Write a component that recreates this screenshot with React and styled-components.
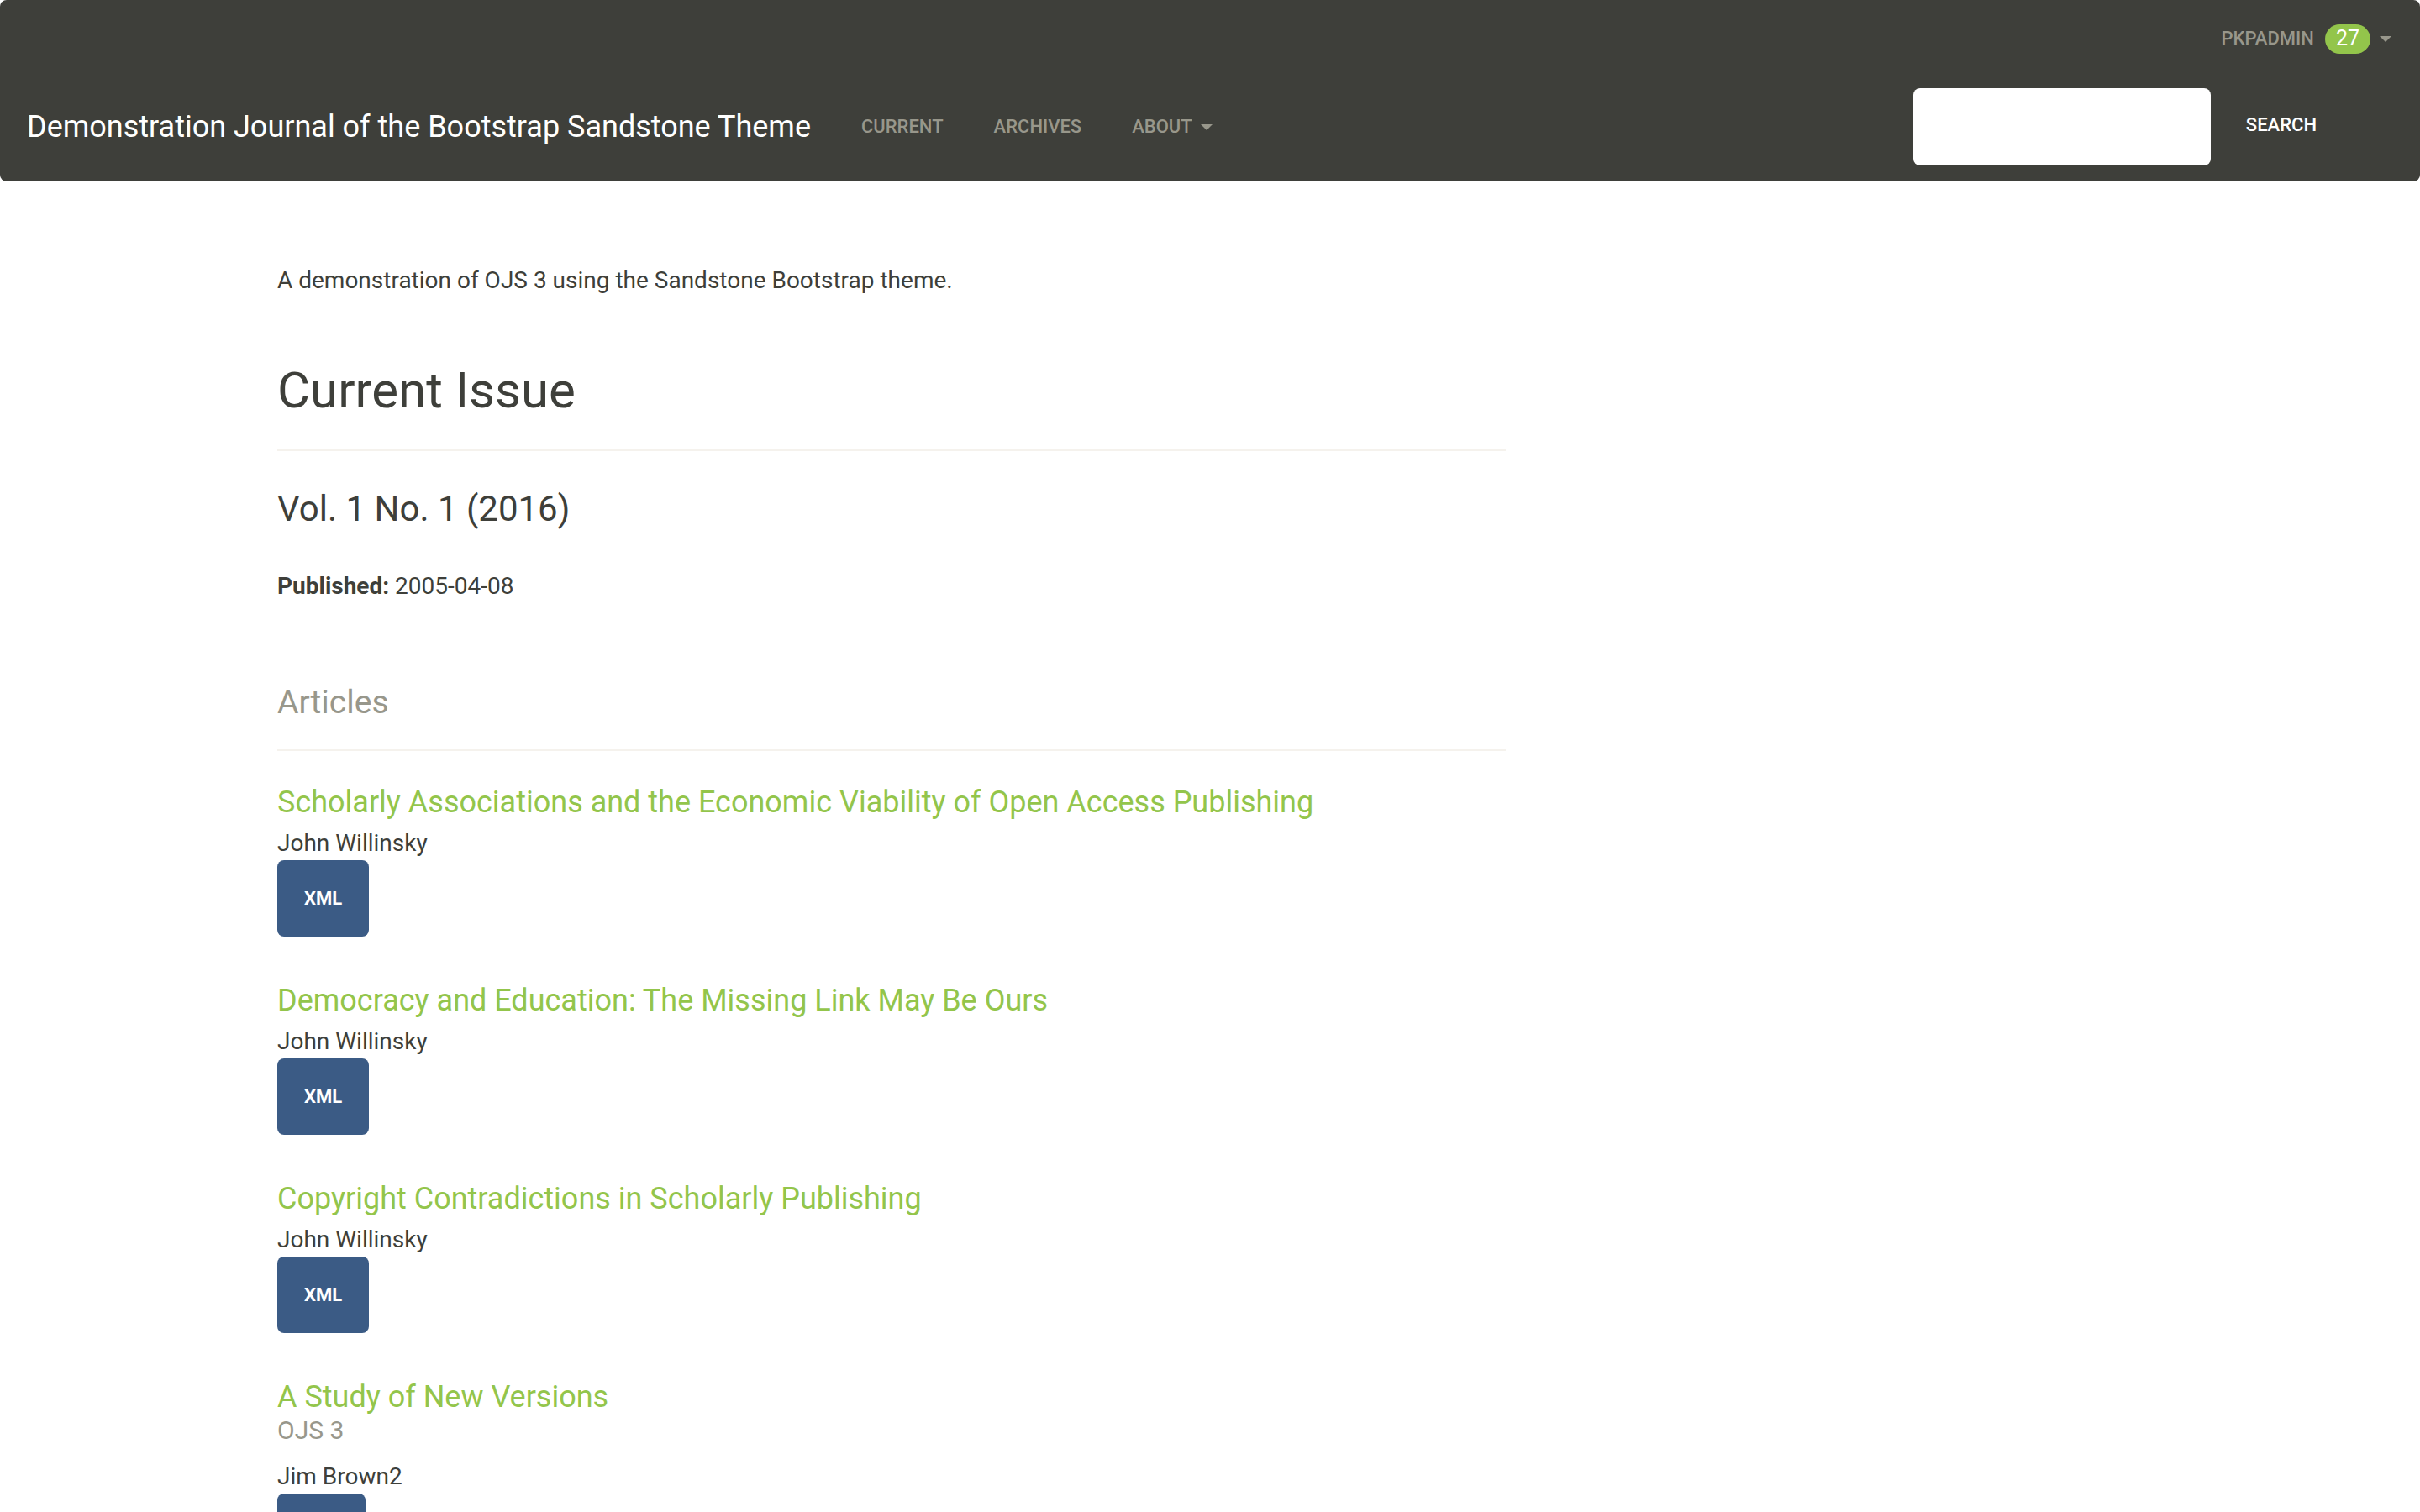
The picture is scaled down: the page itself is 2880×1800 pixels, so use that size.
import React from "react";
import styled, { createGlobalStyle } from "styled-components";

const GlobalStyle = createGlobalStyle`
  * {
    box-sizing: border-box;
  }
  html,
  body {
    margin: 0;
    padding: 0;
    background: #ffffff;
  }
  body {
    font-family: Roboto, "Helvetica Neue", "Liberation Sans", Arial, sans-serif;
    font-size: 28px;
    line-height: 40px;
    color: #3e3f3a;
  }
`;

const Navbar = styled.header`
  height: 216px;
  background: #3e3f3a;
  border-radius: 8px;
  display: flex;
  flex-direction: column;
`;

const UserRow = styled.div`
  height: 86px;
  padding: 6px 34px 0 0;
  display: flex;
  align-items: center;
  justify-content: flex-end;
`;

const UserName = styled.span`
  font-size: 22px;
  font-weight: 500;
  color: #98978b;
  text-transform: uppercase;
`;

const Badge = styled.span`
  margin-left: 13px;
  height: 35px;
  min-width: 54px;
  padding: 0 13px;
  border-radius: 18px;
  background: #93c54b;
  color: #ffffff;
  font-size: 25px;
  display: inline-flex;
  align-items: center;
  justify-content: center;
`;

const Caret = styled.span`
  margin-left: ${(p) => p.$gap || 10}px;
  width: 0;
  height: 0;
  border-left: 7.5px solid transparent;
  border-right: 7.5px solid transparent;
  border-top: 7px solid #98978b;
`;

const MainRow = styled.div`
  flex: 1;
  display: flex;
  align-items: center;
`;

const Brand = styled.a`
  padding: 0 30px 0 32px;
  font-size: 36px;
  color: #ffffff;
  text-decoration: none;
  white-space: nowrap;
`;

const NavList = styled.nav`
  display: flex;
  align-items: center;
`;

const NavLink = styled.a`
  padding: 0 30px;
  display: flex;
  align-items: center;
  font-size: 22px;
  font-weight: 500;
  color: #98978b;
  text-transform: uppercase;
  text-decoration: none;
`;

const SearchForm = styled.form`
  margin-left: auto;
  display: flex;
  align-items: center;
`;

const SearchInput = styled.input`
  width: 354px;
  height: 92px;
  border: none;
  border-radius: 8px;
  background: #ffffff;
`;

const SearchButton = styled.button`
  padding: 0 123px 5px 42px;
  border: none;
  background: none;
  color: #ffffff;
  font-family: inherit;
  font-size: 22px;
  font-weight: 500;
  text-transform: uppercase;
`;

const Main = styled.main`
  width: 1792px;
  padding-left: 330px;
  padding-bottom: 80px;
`;

const Description = styled.p`
  margin: 98px 0 0;
`;

const PageTitle = styled.h1`
  margin: 78px 0 0;
  font-size: 60px;
  line-height: 66px;
  font-weight: 400;
`;

const Divider = styled.hr`
  margin: ${(p) => p.$top}px 0 0;
  height: 2px;
  border: none;
  background: #f5f2ed;
`;

const IssueTitle = styled.h2`
  margin: 45px 0 0;
  font-size: 42px;
  line-height: 48px;
  font-weight: 400;
`;

const Published = styled.p`
  margin: 48px 0 0;

  strong {
    font-weight: 700;
  }
`;

const SectionTitle = styled.h2`
  margin: 96px 0 0;
  font-size: 39px;
  line-height: 44px;
  font-weight: 400;
  color: #98978b;
`;

const ArticleList = styled.div`
  margin-top: 41px;
`;

const Article = styled.div`
  margin-bottom: 56px;
`;

const ArticleTitle = styled.h3`
  margin: 0;
  font-size: 36px;
  line-height: 40px;
  font-weight: 400;

  a {
    color: #93c54b;
    text-decoration: none;
  }
`;

const Subtitle = styled.div`
  font-size: 30px;
  line-height: 40px;
  color: #98978b;
`;

const Authors = styled.div`
  margin-top: ${(p) => (p.$afterSubtitle ? 15 : 9)}px;
`;

const GalleyButton = styled.a`
  height: 91px;
  padding: 0 32px;
  display: inline-flex;
  align-items: center;
  border-radius: 8px;
  background: #3b5b85;
  color: #ffffff;
  font-size: 22px;
  font-weight: 700;
  text-decoration: none;
  vertical-align: top;
`;

const articles = [
  {
    title:
      "Scholarly Associations and the Economic Viability of Open Access Publishing",
    authors: "John Willinsky",
    galley: "XML",
  },
  {
    title: "Democracy and Education: The Missing Link May Be Ours",
    authors: "John Willinsky",
    galley: "XML",
  },
  {
    title: "Copyright Contradictions in Scholarly Publishing",
    authors: "John Willinsky",
    galley: "XML",
  },
  {
    title: "A Study of New Versions",
    subtitle: "OJS 3",
    authors: "Jim Brown2",
    galley: "PDF",
  },
];

export default function App() {
  return (
    <>
      <GlobalStyle />
      <Navbar>
        <UserRow>
          <UserName>pkpadmin</UserName>
          <Badge>27</Badge>
          <Caret $gap={11} />
        </UserRow>
        <MainRow>
          <Brand href="#">
            Demonstration Journal of the Bootstrap Sandstone Theme
          </Brand>
          <NavList>
            <NavLink href="#">Current</NavLink>
            <NavLink href="#">Archives</NavLink>
            <NavLink href="#">
              About
              <Caret />
            </NavLink>
          </NavList>
          <SearchForm onSubmit={(e) => e.preventDefault()}>
            <SearchInput type="text" aria-label="Search" />
            <SearchButton type="submit">Search</SearchButton>
          </SearchForm>
        </MainRow>
      </Navbar>

      <Main>
        <Description>
          A demonstration of OJS 3 using the Sandstone Bootstrap theme.
        </Description>
        <PageTitle>Current Issue</PageTitle>
        <Divider $top={37} />
        <IssueTitle>Vol. 1 No. 1 (2016)</IssueTitle>
        <Published>
          <strong>Published:</strong> 2005-04-08
        </Published>

        <SectionTitle>Articles</SectionTitle>
        <Divider $top={34} />
        <ArticleList>
          {articles.map((article) => (
            <Article key={article.title}>
              <ArticleTitle>
                <a href="#">{article.title}</a>
              </ArticleTitle>
              {article.subtitle && <Subtitle>{article.subtitle}</Subtitle>}
              <Authors $afterSubtitle={Boolean(article.subtitle)}>
                {article.authors}
              </Authors>
              <GalleyButton href="#">{article.galley}</GalleyButton>
            </Article>
          ))}
        </ArticleList>
      </Main>
    </>
  );
}
